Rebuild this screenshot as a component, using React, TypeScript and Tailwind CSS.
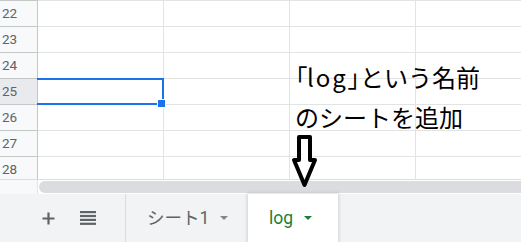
import React from "react";

const rows = [22, 23, 24, 25, 26, 27, 28];
const cols = [0, 1, 2, 3];

function Caret({ color }: { color: string }) {
  return (
    <span
      className="ml-[11px] inline-block h-0 w-0 border-x-[4px] border-t-[4px] border-x-transparent"
      style={{ borderTopColor: color }}
    />
  );
}

export default function App() {
  return (
    <div className="relative h-[242px] w-[521px] overflow-hidden bg-white font-['Roboto',sans-serif]">
      {/* grid */}
      <div className="h-[179px] overflow-hidden">
        <div className="flex h-px">
          <div className="w-[38px] shrink-0 bg-[#c4c7c5]" />
          <div className="flex-1 bg-[#e2e3e3]" />
        </div>
        {rows.map((r) => (
          <div key={r} className="flex h-[26px]">
            <div
              className={
                "flex w-[38px] shrink-0 items-center border-b border-r border-[#c4c7c5] pl-[2px] text-[13.5px] text-[#5f6368] " +
                (r === 25 ? "bg-[#e8eaed]" : "bg-[#f8f9fa]")
              }
            >
              {r}
            </div>
            {cols.map((c) => (
              <div key={c} className="w-[126px] shrink-0 border-b border-r border-[#e2e3e3]" />
            ))}
          </div>
        ))}
      </div>

      {/* horizontal scrollbar */}
      <div className="flex h-[15px] border-t border-[#dadce0]">
        <div className="w-[38px] shrink-0 border-r border-[#e2e3e3] bg-[#f8f9fa]" />
        <div className="flex-1 pl-px pt-px">
          <div className="-mr-[20px] h-[12px] rounded-full bg-[#dadce0]" />
        </div>
      </div>

      {/* sheet bar */}
      <div className="flex h-[48px] items-stretch bg-[#f1f3f4] text-[17.5px]">
        <div className="flex items-center pl-[42px]">
          <svg width="13" height="13" viewBox="0 0 13 13">
            <path d="M6.5 0.5v12M0.5 6.5h12" stroke="#5f6368" strokeWidth="2.2" />
          </svg>
          <svg className="ml-[25px]" width="16" height="14" viewBox="0 0 16 14">
            <rect x="0" y="0" width="16" height="2.2" fill="#5f6368" />
            <rect x="0" y="3.9" width="16" height="2.2" fill="#5f6368" />
            <rect x="0" y="7.8" width="16" height="2.2" fill="#5f6368" />
            <rect x="0" y="11.7" width="16" height="2.2" fill="#5f6368" />
          </svg>
        </div>
        <div className="ml-[29px] flex w-[123px] items-center border-l border-[#dadce0] pl-[21px] text-[#5f6368]">
          <span className="font-['Roboto','Noto_Sans_CJK_JP',sans-serif]">シート1</span>
          <Caret color="#80868b" />
        </div>
        <div className="flex w-[90px] items-center bg-white pl-[21px] text-[#188038] shadow-[0_0_3px_1px_rgba(60,64,67,0.18)]">
          <span>log</span>
          <Caret color="#188038" />
        </div>
      </div>

      {/* selected cell */}
      <div className="pointer-events-none absolute left-[37px] top-[78px] h-[27px] w-[127px] border-y-2 border-r-2 border-[#1a73e8]" />
      <div className="absolute left-[157px] top-[99px] h-[9px] w-[9px] border border-white bg-[#1a73e8]" />

      {/* annotation */}
      <div className="absolute left-[295px] top-[57px] font-['Noto_Sans_CJK_JP',sans-serif] text-[24px] leading-[40px] text-black">
        <div>
          <span className="[font-feature-settings:'palt']">「</span>
          <span className="tracking-[2px]">log</span>
          <span className="[font-feature-settings:'palt']">」</span>
          という名前
        </div>
        <div>のシートを追加</div>
      </div>
      <svg className="absolute left-[288px] top-[131px]" width="32" height="60" viewBox="288 131 32 60">
        <path
          d="M299 160 L299 137 L310 137 L310 160 L315 160 L304.5 185 L294 160 Z"
          fill="white"
          stroke="black"
          strokeWidth="4"
          strokeLinejoin="round"
        />
      </svg>
    </div>
  );
}
